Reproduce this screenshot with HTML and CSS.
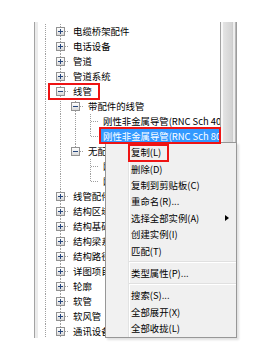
FILE: index.html
```html
<!DOCTYPE html>
<html lang="zh">
<head>
    <meta charset="UTF-8">
    <title>项目浏览器</title>
    <link rel="stylesheet" href="styles.css">
</head>
<body>
<div class="screen">

    <div class="tree-frame">
        <div class="tree">
            <div class="row"><span class="guide on"></span><span class="joint"><span class="box plus"></span></span><span class="label">电缆桥架配件</span></div>
            <div class="row"><span class="guide on"></span><span class="joint"><span class="box plus"></span></span><span class="label">电话设备</span></div>
            <div class="row"><span class="guide on"></span><span class="joint"><span class="box plus"></span></span><span class="label">管道</span></div>
            <div class="row"><span class="guide on"></span><span class="joint"><span class="box plus"></span></span><span class="label">管道系统</span></div>
            <div class="row"><span class="guide on"></span><span class="joint"><span class="box minus"></span></span><span class="label">线管</span></div>
            <div class="row"><span class="guide on"></span><span class="guide on"></span><span class="joint"><span class="box minus"></span></span><span class="label">带配件的线管</span></div>
            <div class="row"><span class="guide on"></span><span class="guide on"></span><span class="guide on"></span><span class="joint"></span><span class="label">刚性非金属导管(RNC Sch 40)</span></div>
            <div class="row"><span class="guide on"></span><span class="guide on"></span><span class="guide on"></span><span class="joint last"></span><span class="label selected">刚性非金属导管(RNC Sch 80)</span></div>
            <div class="row"><span class="guide on"></span><span class="guide on"></span><span class="joint last"><span class="box minus"></span></span><span class="label">无配件的线管</span></div>
            <div class="row"><span class="guide on"></span><span class="guide on"></span><span class="guide"></span><span class="joint"></span><span class="label">刚性非金属导管(RNC Sch 40)</span></div>
            <div class="row"><span class="guide on"></span><span class="guide on"></span><span class="guide"></span><span class="joint last"></span><span class="label">刚性非金属导管(RNC Sch 80)</span></div>
            <div class="row"><span class="guide on"></span><span class="joint"><span class="box plus"></span></span><span class="label">线管配件</span></div>
            <div class="row"><span class="guide on"></span><span class="joint"><span class="box plus"></span></span><span class="label">结构区域钢筋</span></div>
            <div class="row"><span class="guide on"></span><span class="joint"><span class="box plus"></span></span><span class="label">结构基础</span></div>
            <div class="row"><span class="guide on"></span><span class="joint"><span class="box plus"></span></span><span class="label">结构梁系统</span></div>
            <div class="row"><span class="guide on"></span><span class="joint"><span class="box plus"></span></span><span class="label">结构路径钢筋</span></div>
            <div class="row"><span class="guide on"></span><span class="joint"><span class="box plus"></span></span><span class="label">详图项目</span></div>
            <div class="row"><span class="guide on"></span><span class="joint"><span class="box plus"></span></span><span class="label">轮廓</span></div>
            <div class="row"><span class="guide on"></span><span class="joint"><span class="box plus"></span></span><span class="label">软管</span></div>
            <div class="row"><span class="guide on"></span><span class="joint"><span class="box plus"></span></span><span class="label">软风管</span></div>
            <div class="row"><span class="guide on"></span><span class="joint"><span class="box plus"></span></span><span class="label">通讯设备</span></div>
        </div>
        <div class="vscroll"></div>
    </div>

    <div class="ctx-menu">
        <div class="item">复制(L)</div>
        <div class="item">删除(D)</div>
        <div class="item">复制到剪贴板(C)</div>
        <div class="item">重命名(R)...</div>
        <div class="item">选择全部实例(A)<span class="arrow"></span></div>
        <div class="item">创建实例(I)</div>
        <div class="item">匹配(T)</div>
        <div class="sep"></div>
        <div class="item">类型属性(P)...</div>
        <div class="sep"></div>
        <div class="item">搜索(S)...</div>
        <div class="item">全部展开(X)</div>
        <div class="item">全部收拢(L)</div>
    </div>

    <div class="mark mark-node"></div>
    <div class="mark mark-select"></div>
    <div class="mark mark-copy"></div>

</div>
</body>
</html>
```

FILE: styles.css
```css
body {
    margin: 0;
    padding: 0;
    background-color: #fff;
    font-family: "Noto Sans CJK SC", "Microsoft YaHei", sans-serif;
}
.screen {
    position: relative;
    width: 266px;
    height: 351px;
    overflow: hidden;
}
.tree-frame {
    display: flex;
    margin: 22px 0 0 34px;
    width: 203px;
    height: 316px;
    border-left: 1px solid #a3a3a3;
    box-sizing: border-box;
}
.tree {
    flex: 1;
    overflow: hidden;
    padding-top: 2px;
    border-left: 3px solid #ebebeb;
    font-size: 9.4px;
    line-height: 15px;
    color: #000;
}
.row {
    display: flex;
    height: 15px;
    white-space: nowrap;
}
.guide {
    flex: none;
    width: 15px;
}
.guide.on {
    background: repeating-linear-gradient(to bottom, #a0a0a0 0 1px, transparent 1px 2px) no-repeat 7px 0 / 1px 100%;
}
.joint {
    flex: none;
    display: flex;
    align-items: center;
    width: 15px;
    background:
        repeating-linear-gradient(to right, #a0a0a0 0 1px, transparent 1px 2px) no-repeat 8px 7px / 7px 1px,
        repeating-linear-gradient(to bottom, #a0a0a0 0 1px, transparent 1px 2px) no-repeat 7px 0 / 1px 100%;
}
.joint.last {
    background-size: 7px 1px, 1px 8px;
}
.box {
    width: 9px;
    height: 9px;
    margin-left: 3px;
    box-sizing: border-box;
    border: 1px solid #929292;
}
.box.plus {
    background:
        linear-gradient(#24457c, #24457c) no-repeat center / 5px 1px,
        linear-gradient(#24457c, #24457c) no-repeat center / 1px 5px,
        linear-gradient(#fff, #d9d9d9);
}
.box.minus {
    background:
        linear-gradient(#24457c, #24457c) no-repeat center / 5px 1px,
        linear-gradient(#fff, #d9d9d9);
}
.label {
    margin-left: 3px;
    padding: 0 2px;
}
.label.selected {
    background-color: #3399ff;
    color: #fff;
}
.vscroll {
    flex: none;
    width: 17px;
    background: linear-gradient(to right,
        #a2a2a2 0 1px, #f7f7f7 1px 3px, #e4e4e4 3px, #d3d3d3 12px,
        #c8c8c8 13px, #eeeeee 13px 15px, #b9b9b9 15px 16px, #9c9c9c 16px);
}
.ctx-menu {
    position: absolute;
    left: 105px;
    top: 142px;
    width: 132px;
    box-sizing: border-box;
    padding: 1px 0;
    border: 1px solid #979797;
    background: linear-gradient(to right, #f1f1f1 0 22px, #e2e3e3 22px 23px, #fff 23px 24px, #f0f0f0 24px);
    box-shadow: 2px 2px 2px rgba(0, 0, 0, 0.12);
    font-size: 9.4px;
    color: #000;
}
.ctx-menu .item {
    display: flex;
    align-items: center;
    justify-content: space-between;
    height: 16.4px;
    padding: 0 7px 0 25px;
    white-space: nowrap;
}
.ctx-menu .arrow {
    width: 0;
    height: 0;
    border-left: 4px solid #000;
    border-top: 3.5px solid transparent;
    border-bottom: 3.5px solid transparent;
}
.ctx-menu .sep {
    height: 2px;
    margin: 2px 0 2px 23px;
    box-sizing: border-box;
    border-top: 1px solid #e0e0e0;
    border-bottom: 1px solid #fff;
}
.mark {
    position: absolute;
    box-sizing: border-box;
    border: 2px solid #ee1414;
}
.mark-node {
    left: 48px;
    top: 83px;
    width: 52px;
    height: 17px;
}
.mark-select {
    left: 99px;
    top: 127px;
    width: 122px;
    height: 17px;
}
.mark-copy {
    left: 128px;
    top: 144px;
    width: 41px;
    height: 18px;
}
```
